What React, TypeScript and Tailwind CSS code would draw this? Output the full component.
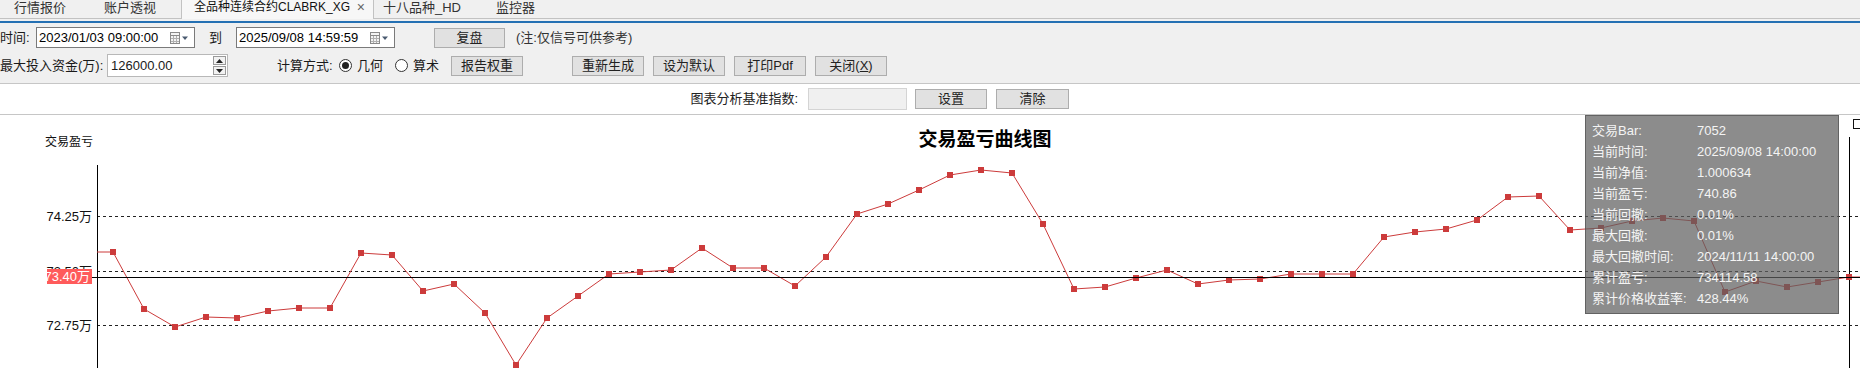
import React from "react"

const ys = [
  252, 309, 327, 317, 318, 311, 308, 308, 253, 255, 291, 284, 313, 365, 318, 296, 274, 272, 270, 248,
  268, 268, 286, 257, 214, 204, 190, 175, 170, 173, 224, 289, 287, 278, 270, 284, 280, 279, 274, 274,
  274, 237, 232, 229, 220, 197, 196, 230, 228, 221, 218, 221, 292, 281, 287, 282, 277,
]
const pts = ys.map((y, i) => ({ x: 113 + 31 * i, y }))

const tipRows: [string, string][] = [
  ["交易Bar:", "7052"],
  ["当前时间:", "2025/09/08 14:00:00"],
  ["当前净值:", "1.000634"],
  ["当前盈亏:", "740.86"],
  ["当前回撤:", "0.01%"],
  ["最大回撤:", "0.01%"],
  ["最大回撤时间:", "2024/11/11 14:00:00"],
  ["累计盈亏:", "734114.58"],
  ["累计价格收益率:", "428.44%"],
]

const CalendarIcon = () => (
  <svg width="22" height="14" viewBox="0 0 22 14" className="shrink-0">
    <rect x="1.5" y="1.5" width="9" height="11" fill="#f4f4f4" stroke="#8a8a8a" />
    <line x1="2" y1="4.5" x2="10" y2="4.5" stroke="#8a8a8a" />
    <line x1="2" y1="7.5" x2="10" y2="7.5" stroke="#b0b0b0" />
    <line x1="2" y1="10.5" x2="10" y2="10.5" stroke="#b0b0b0" />
    <line x1="4.5" y1="5" x2="4.5" y2="12" stroke="#b0b0b0" />
    <line x1="7.5" y1="5" x2="7.5" y2="12" stroke="#b0b0b0" />
    <path d="M13 5.5 L19 5.5 L16 9 Z" fill="#4a5a70" />
  </svg>
)

const DateBox = ({ value }: { value: string }) => (
  <div className="flex items-center justify-between w-[159px] h-[21px] bg-white border border-[#7a7a7a] pl-[2px] pr-[3px]">
    <span className="text-[13px] text-black leading-none whitespace-nowrap">{value}</span>
    <CalendarIcon />
  </div>
)

const Btn = ({ children, w = 72 }: { children: React.ReactNode; w?: number }) => (
  <div
    className="flex items-center justify-center h-[20px] bg-[#e1e1e1] border border-[#adadad] text-[13px] text-[#222] whitespace-nowrap"
    style={{ width: w }}
  >
    {children}
  </div>
)

const Radio = ({ checked, label }: { checked?: boolean; label: string }) => (
  <div className="flex items-center gap-[5px]">
    <div className="w-[13px] h-[13px] rounded-full border border-[#333] bg-white flex items-center justify-center">
      {checked && <div className="w-[7px] h-[7px] rounded-full bg-[#222]" />}
    </div>
    <span className="text-[13px]">{label}</span>
  </div>
)

const App = () => {
  return (
    <div className="w-[1860px] h-[368px] overflow-hidden flex flex-col bg-white text-[#1a1a1a] font-['Liberation_Sans','Noto_Sans_CJK_SC',sans-serif] text-[13px]">
      {/* Tabs */}
      <div className="flex h-[19px] bg-[#f0f0f0] shrink-0 whitespace-nowrap">
        <div className="w-[90px] pl-[14px] border-b border-[#c2c2c2] leading-[15px] text-[13px] text-[#333]">行情报价</div>
        <div className="w-[91px] pl-[14px] border-b border-[#c2c2c2] leading-[15px] text-[13px] text-[#333]">账户透视</div>
        <div className="w-[193px] flex items-start justify-between pl-[12px] pr-[8px] bg-[#f7f7f7] border-x border-[#c2c2c2] leading-[15px]">
          <span className="text-[12px] text-[#111]">全品种连续合约CLABRK_XG</span>
          <span className="text-[14px] text-[#666]">×</span>
        </div>
        <div className="w-[112px] pl-[9px] border-b border-[#c2c2c2] leading-[15px] text-[13px] text-[#333]">十八品种_HD</div>
        <div className="flex-1 pl-[10px] border-b border-[#c2c2c2] leading-[15px] text-[13px] text-[#333]">监控器</div>
      </div>
      <div className="h-[2px] bg-[#f0f0f0] shrink-0" />
      <div className="h-[2px] bg-[#2470b3] shrink-0" />

      {/* Toolbar */}
      <div className="flex flex-col bg-[#f0f0f0] border-b border-[#c6c6c6] h-[61px] pt-[4px] shrink-0 whitespace-nowrap">
        <div className="flex items-center h-[21px]">
          <span className="w-[36px]">时间:</span>
          <DateBox value="2023/01/03 09:00:00" />
          <span className="w-[41px] text-center">到</span>
          <DateBox value="2025/09/08 14:59:59" />
          <div className="ml-[39px]">
            <Btn w={71}>复盘</Btn>
          </div>
          <span className="ml-[11px] text-[#333]">(注:仅信号可供参考)</span>
        </div>
        <div className="flex items-center h-[23px] mt-[6px]">
          <span className="w-[107px]">最大投入资金(万):</span>
          <div className="flex items-center justify-between w-[121px] h-[23px] bg-white border border-[#b8b8b8] pl-[3px] pr-[1px]">
            <span className="text-[13px]">126000.00</span>
            <div className="flex flex-col gap-[1px]">
              <div className="w-[13px] h-[9px] border border-[#9a9a9a] bg-[#f2f2f2] flex items-center justify-center">
                <svg width="7" height="4" viewBox="0 0 7 4"><path d="M0 4 L3.5 0 L7 4 Z" fill="#222" /></svg>
              </div>
              <div className="w-[13px] h-[9px] border border-[#9a9a9a] bg-[#f2f2f2] flex items-center justify-center">
                <svg width="7" height="4" viewBox="0 0 7 4"><path d="M0 0 L7 0 L3.5 4 Z" fill="#222" /></svg>
              </div>
            </div>
          </div>
          <span className="ml-[49px] w-[62px]">计算方式:</span>
          <Radio checked label="几何" />
          <div className="ml-[12px]">
            <Radio label="算术" />
          </div>
          <div className="ml-[12px]">
            <Btn w={72}>报告权重</Btn>
          </div>
          <div className="ml-[49px] flex gap-[9px]">
            <Btn w={72}>重新生成</Btn>
            <Btn w={72}>设为默认</Btn>
            <Btn w={72}>打印Pdf</Btn>
            <Btn w={72}>
              关闭(<span className="underline">X</span>)
            </Btn>
          </div>
        </div>
      </div>

      {/* Benchmark row */}
      <div className="flex items-center h-[31px] bg-white border-b border-[#c6c6c6] shrink-0">
        <span className="w-[798px] text-right text-[#222]">图表分析基准指数:</span>
        <div className="ml-[10px] w-[99px] h-[22px] bg-[#f0f0f0] border border-[#d4d4d4]" />
        <div className="ml-[8px]">
          <Btn w={72}>设置</Btn>
        </div>
        <div className="ml-[9px]">
          <Btn w={73}>清除</Btn>
        </div>
      </div>

      {/* Chart */}
      <div className="relative flex-1 bg-white">
        <svg width="1860" height="253" viewBox="0 115 1860 253" className="block">
          <text x="45" y="146" fontSize="12" fill="#111">交易盈亏</text>
          <text x="985" y="146" fontSize="19" fontWeight="bold" textAnchor="middle" fill="#000">
            交易盈亏曲线图
          </text>

          {[216, 271, 325].map((y) => (
            <line key={y} x1="97" y1={y + 0.5} x2="1860" y2={y + 0.5} stroke="#222" strokeDasharray="3 3" />
          ))}
          <text x="92" y="221" fontSize="13" textAnchor="end" fill="#111">74.25万</text>
          <text x="92" y="330" fontSize="13" textAnchor="end" fill="#111">72.75万</text>

          <line x1="97.5" y1="165" x2="97.5" y2="368" stroke="#000" />
          <line x1="1849.5" y1="137" x2="1849.5" y2="368" stroke="#000" />

          <polyline
            points={[`97,252`, ...pts.map((p) => `${p.x},${p.y}`), `1860,277`].join(" ")}
            fill="none"
            stroke="#cc3b3b"
            strokeWidth="1"
          />
          {pts.map((p) => (
            <rect key={p.x} x={p.x - 3} y={p.y - 3} width="6" height="6" fill="#cc3b3b" />
          ))}

          <line x1="92" y1="277.5" x2="1860" y2="277.5" stroke="#000" />
          {/* 73.50 label sits mostly under the crosshair value tag */}
          <svg x="0" y="262" width="92" height="7" overflow="hidden">
            <text x="92" y="14" fontSize="13" textAnchor="end" fill="#111">73.50万</text>
          </svg>
          <rect x="47" y="269" width="45" height="15" fill="#ff5b5b" />
          <text x="90" y="281" fontSize="13" textAnchor="end" fill="#fff">73.40万</text>
        </svg>

        {/* Tooltip */}
        <div className="absolute left-[1585px] top-0 w-[254px] h-[199px] bg-[rgba(96,96,96,0.72)] border border-[rgba(70,70,70,0.6)] pt-[4px] pl-[6px] text-[#f4f4f4] text-[13px] whitespace-nowrap">
          {tipRows.map(([k, v]) => (
            <div key={k} className="flex h-[21px] items-center">
              <span className="w-[105px]">{k}</span>
              <span>{v}</span>
            </div>
          ))}
        </div>
        <div className="absolute left-[1853px] top-[4px] w-[11px] h-[10px] border border-[#111] bg-white" />
      </div>
    </div>
  )
}

export default App
